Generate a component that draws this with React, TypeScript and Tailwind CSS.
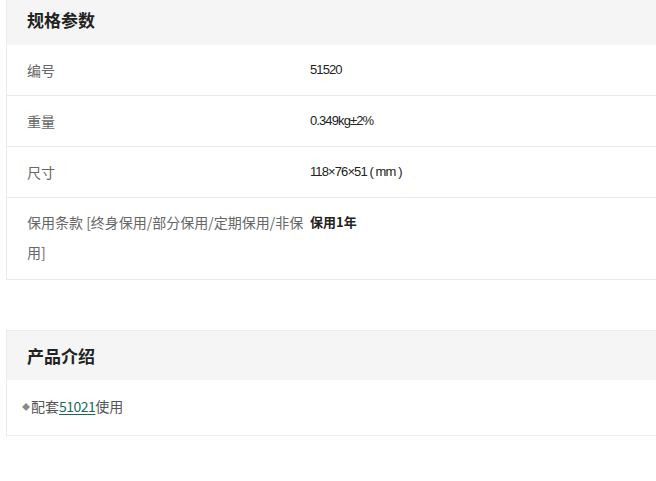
const specs = [
  { label: "编号", value: "51520" },
  { label: "重量", value: "0.349kg±2%" },
  { label: "尺寸", value: "118×76×51 ( mm )" },
];

export default function App() {
  return (
    <div
      className="w-[656px] h-[481px] overflow-hidden bg-white -mt-[5px]"
      style={{ fontFamily: '"Noto Sans CJK SC", "Liberation Sans", sans-serif' }}
    >
      <div className="ml-[6px] w-[700px] border-l border-b border-[#ebebeb]">
        <div className="h-[50px] bg-[#f5f5f5] flex items-center pl-[20px] text-[17px] font-bold text-[#222]">
          规格参数
        </div>
        {specs.map((s) => (
          <div key={s.label} className="flex h-[51px] items-center border-b border-[#ebebeb]">
            <div className="w-[303px] pl-[20px] text-[14px] text-[#666]">{s.label}</div>
            <div className="text-[13px] tracking-[-0.9px] text-[#222] font-['Liberation_Sans','Noto_Sans_CJK_SC',sans-serif]">
              {s.value}
            </div>
          </div>
        ))}
        <div className="flex h-[81px] pt-[9px]">
          <div className="w-[303px] pl-[20px] pr-[4px] text-[14px] leading-[30px] text-[#666]">
            保用条款 [终身保用/部分保用/定期保用/非保用]
          </div>
          <div className="text-[13px] leading-[30px] font-bold text-[#222]">保用1年</div>
        </div>
      </div>

      <div className="ml-[6px] mt-[50px] w-[700px] border-l border-t border-b border-[#ebebeb]">
        <div className="h-[49px] bg-[#f5f5f5] flex items-center pl-[20px] text-[17px] font-bold text-[#222]">
          产品介绍
        </div>
        <div className="h-[55px] flex items-center pl-[15px] pb-[2px] text-[14px] text-[#555]">
          <span className="text-[8px] text-[#888] mr-[1px]">◆</span>
          配套
          <span className="text-[#1c6b5a] underline underline-offset-2 tracking-[-0.5px]">51021</span>
          使用
        </div>
      </div>
    </div>
  );
}
